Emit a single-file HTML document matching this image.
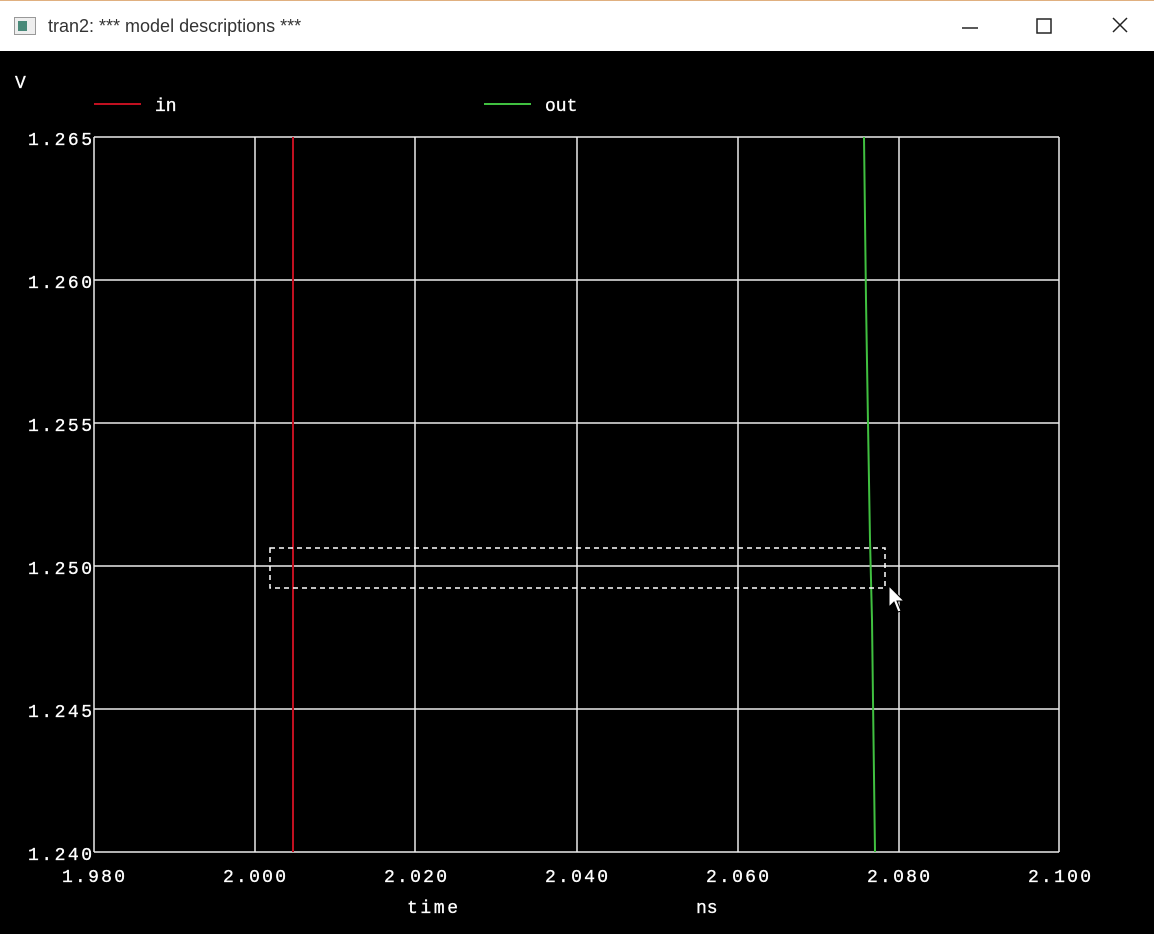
<!DOCTYPE html>
<html><head><style>
html,body{margin:0;padding:0;width:1154px;height:934px;overflow:hidden;background:#000}
.tb{position:absolute;left:0;top:0;width:1154px;height:51px;background:#fff;border-top:1px solid #e0b080;box-sizing:border-box}
.t{position:absolute;left:48px;top:15px;font:18px "Liberation Sans",sans-serif;color:#333}
</style></head><body>
<div class="tb">
<div style="position:absolute;left:14px;top:16px;width:20px;height:16px;border:1px solid #999;background:#eee"><div style="position:absolute;left:3px;top:3px;width:9px;height:10px;background:#4a8a7a"></div></div>
<div class="t">tran2: *** model descriptions ***</div>
<svg style="position:absolute;left:950px;top:10px" width="190" height="32" stroke="#222" stroke-width="1.5" fill="none">
<line x1="12" y1="17" x2="28" y2="17"/>
<rect x="87" y="8" width="14" height="14"/>
<line x1="163" y1="7" x2="177" y2="21"/><line x1="177" y1="7" x2="163" y2="21"/>
</svg>
</div>
<svg style="position:absolute;left:0;top:0" width="1154" height="934" font-family="Liberation Mono,monospace" font-size="18" fill="#fff">
<g stroke="#eee" stroke-width="1.5">
<line x1="94" y1="137" x2="1059" y2="137"/><line x1="94" y1="280" x2="1059" y2="280"/><line x1="94" y1="423" x2="1059" y2="423"/><line x1="94" y1="566" x2="1059" y2="566"/><line x1="94" y1="709" x2="1059" y2="709"/><line x1="94" y1="852" x2="1059" y2="852"/>
<line x1="94" y1="137" x2="94" y2="852"/><line x1="255" y1="137" x2="255" y2="852"/><line x1="415" y1="137" x2="415" y2="852"/><line x1="577" y1="137" x2="577" y2="852"/><line x1="738" y1="137" x2="738" y2="852"/><line x1="899" y1="137" x2="899" y2="852"/><line x1="1059" y1="137" x2="1059" y2="852"/>
</g>
<line x1="293" y1="137" x2="293" y2="852" stroke="#c01020" stroke-width="2"/>
<polyline points="864,137 866,300 868,423 870,540 872,620 873,700 875,852" stroke="#40c040" stroke-width="2" fill="none"/>
<rect x="270" y="548" width="615" height="40" stroke="#fff" stroke-width="1.5" stroke-dasharray="5,4" fill="none"/>
<path d="M889 586 L889 607 L894 602 L898 612 L901 611 L897 601 L904 601 Z" fill="#fff" stroke="#000" stroke-width="1"/>
<line x1="94" y1="104" x2="141" y2="104" stroke="#c01020" stroke-width="2"/>
<line x1="484" y1="104" x2="531" y2="104" stroke="#40c040" stroke-width="2"/>
<g stroke="#fff" stroke-width="0.3">
<text x="155" y="111">in</text><text x="545" y="111">out</text>
<text x="15" y="88">V</text>
<text x="28" y="145" textLength="64">1.265</text>
<text x="28" y="288" textLength="64">1.260</text>
<text x="28" y="431" textLength="64">1.255</text>
<text x="28" y="574" textLength="64">1.250</text>
<text x="28" y="717" textLength="64">1.245</text>
<text x="28" y="860" textLength="64">1.240</text>
<text x="62" y="882" textLength="63">1.980</text>
<text x="223" y="882" textLength="63">2.000</text>
<text x="384" y="882" textLength="63">2.020</text>
<text x="545" y="882" textLength="63">2.040</text>
<text x="706" y="882" textLength="63">2.060</text>
<text x="867" y="882" textLength="63">2.080</text>
<text x="1028" y="882" textLength="63">2.100</text>
<text x="407" y="913" textLength="51">time</text>
<text x="696" y="913">ns</text>
</g>
</svg>
</body></html>
